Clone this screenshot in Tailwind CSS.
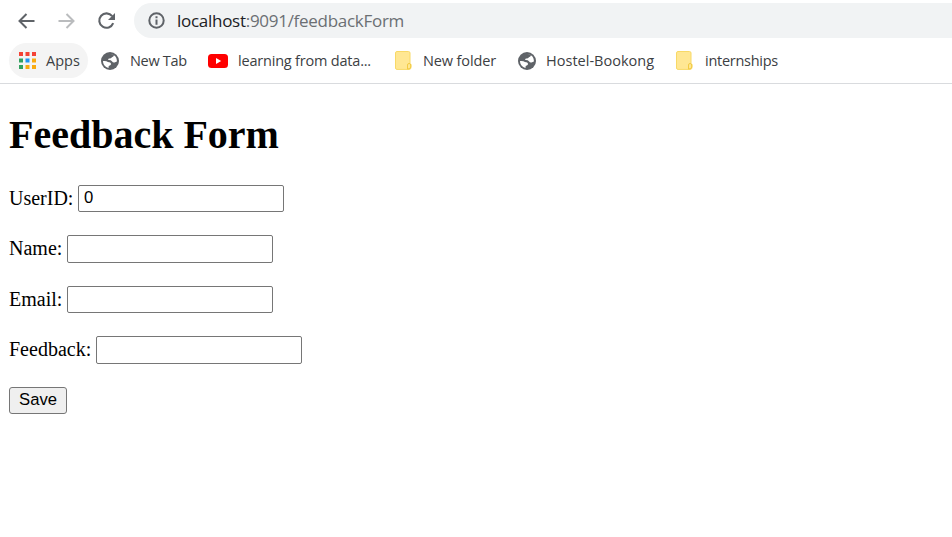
<!DOCTYPE html>
<html lang="en">
<head>
<meta charset="utf-8">
<title>Feedback Form</title>
<script src="https://cdn.jsdelivr.net/npm/@tailwindcss/browser@4"></script>
</head>
<body class="h-[537px] overflow-hidden bg-white text-black">
<svg class="hidden">
  <symbol id="globe" viewBox="0 0 18 18"><circle cx="9" cy="9" r="9" fill="#5f6368"/><path d="M9 2Q11.500 2 13 3.300Q12.600 4.800 11 5.200Q9.800 6.800 8.100 6.500Q6.700 6.600 7.300 8.100Q9.900 7.900 10.900 9.200Q12 10.800 13.500 10.400L15.900 9.600C16.300 5.700 13.500 2 9 2Z" fill="#fff"/><path d="M2 9Q5.400 8.600 6.900 9.900Q9.900 9.900 10.200 12Q9.600 13.500 7.700 13.900L7.500 15.900C4.300 15.200 2 12.500 2 9Z" fill="#fff"/></symbol>
  <symbol id="folder" viewBox="0 0 17 19"><path d="M2 .5H13.500Q15 .5 15 2V12.500L16 13.500V16.500Q16 18.400 14 18.400H2Q.5 18.400 .5 17V2Q.5 .5 2 .5Z" fill="#ffe793" stroke="#f8d967"/><path d="M12.500 18V14Q12.500 12.500 14 12.500Q15.700 12.500 15.700 14V16Q15.700 18 12.500 18Z" fill="#ffe793" stroke="#f2ca42"/></symbol>
</svg>
<header class="h-[84px] border-b border-[#d9dbde] font-['Open_Sans',sans-serif]">
  <div class="flex h-[41px] items-center pl-[18px]">
    <svg class="mr-[23px] h-4 w-[17px] shrink-0" viewBox="0 0 17 16" fill="none" stroke="#5f6368" stroke-width="2"><path d="M16.500 8H2M8.500 1L1.500 8L8.500 15"/></svg>
    <svg class="mr-[22px] h-4 w-[17px] shrink-0" viewBox="0 0 17 16" fill="none" stroke="#babcbe" stroke-width="2"><path d="M.5 8H15M8.500 1L15.500 8L8.500 15"/></svg>
    <svg class="mr-[19px] h-[18px] w-[18px] shrink-0" viewBox="0 0 18 18"><path d="M15.200 4.200A7.200 7.200 0 1 0 16.200 11.200" fill="none" stroke="#5f6368" stroke-width="2.100"/><path d="M18 1V8H11Z" fill="#5f6368"/></svg>
    <div class="flex h-[35px] w-[850px] shrink-0 items-center rounded-l-full bg-[#f1f3f4] pl-[14px]">
      <svg class="mr-3 h-[17px] w-[17px] shrink-0" viewBox="0 0 17 17"><circle cx="8.500" cy="8.500" r="7.200" fill="none" stroke="#5f6368" stroke-width="2"/><path d="M7.500 4.300H9.500V6.200H7.500ZM7.500 7.500H9.500V12.700H7.500Z" fill="#5f6368"/></svg>
      <span class="whitespace-nowrap text-[17px] leading-6 tracking-[-0.280px] text-[#6b6f73]"><span class="text-[#202124]">localhost</span>:9091/feedbackForm</span>
    </div>
  </div>
  <nav class="flex h-[39px] items-center whitespace-nowrap pl-[9px] text-[14.500px] leading-5 text-[#3c4043]">
    <div class="flex h-[35px] w-[79px] shrink-0 items-center rounded-full bg-[#f4f4f4] pl-[10px]">
      <svg class="mr-[10px] h-[17px] w-[17px] shrink-0" viewBox="0 0 17 17"><path d="M0 0h4v4H0zM6.500 0h4v4h-4zM13 0h4v4h-4z" fill="#f44336"/><path d="M0 6.500h4v4H0zM0 13h4v4H0z" fill="#34a160"/><path d="M6.500 6.500h4v4h-4z" fill="#2196f3"/><path d="M13 6.500h4v4h-4zM6.500 13h4v4h-4zM13 13h4v4h-4z" fill="#f9ab12"/></svg>
      <span>Apps</span>
    </div>
    <div class="ml-[13px] flex w-[107px] shrink-0 items-center"><svg class="mr-[11px] h-[18px] w-[18px] shrink-0"><use href="#globe"/></svg><span class="tracking-[-0.300px]">New Tab</span></div>
    <div class="flex w-[187px] shrink-0 items-center"><svg class="mr-[10px] h-[14px] w-5 shrink-0" viewBox="0 0 20 14"><rect width="20" height="14" rx="3.500" fill="#f00"/><path d="M8 4V10L13.200 7Z" fill="#fff"/></svg><span class="tracking-[-0.200px]">learning from data...</span></div>
    <div class="flex w-[123px] shrink-0 items-center"><svg class="mr-[11px] h-[19px] w-[17px] shrink-0"><use href="#folder"/></svg><span class="tracking-[-0.130px]">New folder</span></div>
    <div class="flex w-[158px] shrink-0 items-center"><svg class="mr-[10px] h-[18px] w-[18px] shrink-0"><use href="#globe"/></svg><span class="tracking-[0.020px]">Hostel-Bookong</span></div>
    <div class="flex items-center"><svg class="mr-[12px] h-[19px] w-[17px] shrink-0"><use href="#folder"/></svg><span class="tracking-[-0.280px]">internships</span></div>
  </nav>
</header>
<main class="pl-[9px] pt-[28px] font-['Liberation_Serif',serif] text-[20px] leading-6">
  <h1 class="h-[73px] text-[40px] font-bold leading-[45px]">Feedback Form</h1>
  <form>
    <div class="flex h-[50px] items-start"><label for="userid" class="w-[69px] pt-px">UserID:</label><input id="userid" value="0" class="h-[27px] w-[206px] rounded-[2px] border border-[#767676] px-[5px] pb-px font-['Liberation_Sans',sans-serif] text-[16.667px]"></div>
    <div class="flex h-[51px] items-start"><label for="name" class="w-[58px] pt-px">Name:</label><input id="name" class="h-7 w-[206px] rounded-[2px] border border-[#767676] px-[5px]"></div>
    <div class="flex h-[50px] items-start"><label for="email" class="w-[58px] pt-px">Email:</label><input id="email" class="h-[27px] w-[206px] rounded-[2px] border border-[#767676] px-[5px]"></div>
    <div class="flex h-[51px] items-start"><label for="feedback" class="w-[87px] pt-px">Feedback:</label><input id="feedback" class="h-7 w-[206px] rounded-[2px] border border-[#767676] px-[5px]"></div>
    <button type="button" class="flex h-[27px] w-[58px] items-center justify-center rounded-[3px] border border-[#767676] bg-[#efefef] pb-[2px] font-['Liberation_Sans',sans-serif] text-[16.667px] leading-5">Save</button>
  </form>
</main>
</body>
</html>
